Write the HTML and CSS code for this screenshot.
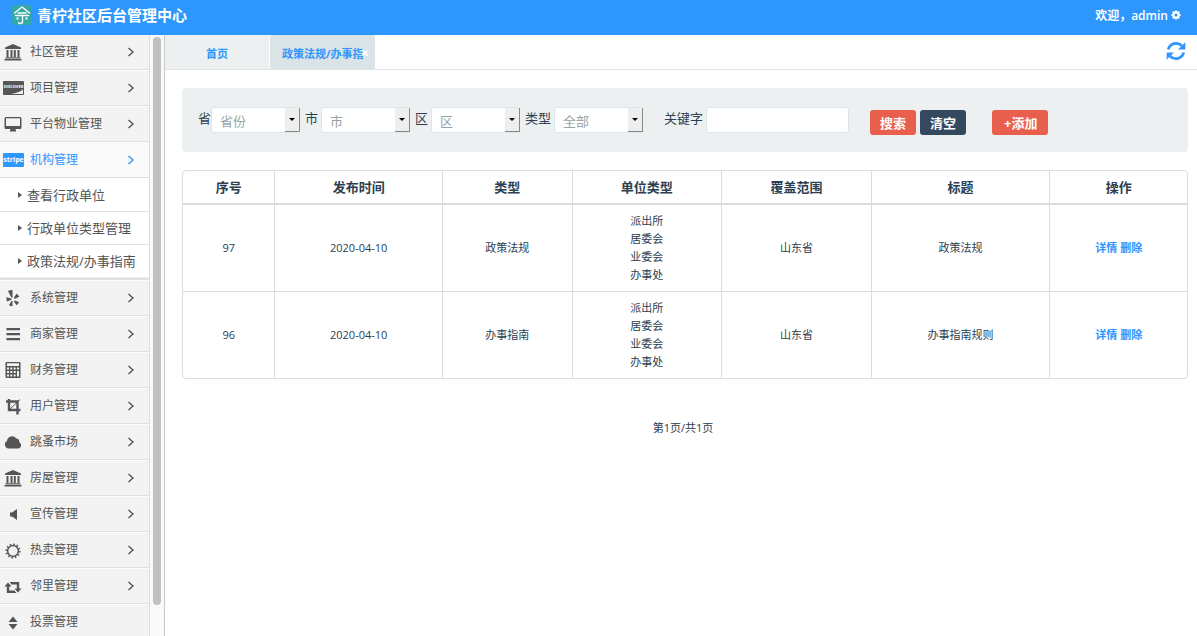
FILE: index.html
```html
<!DOCTYPE html>
<html lang="zh-CN">
<head>
<meta charset="utf-8">
<title>青柠社区后台管理中心</title>
<link rel="stylesheet" href="styles.css">
</head>
<body>
<svg class="defs" aria-hidden="true">
  <symbol id="i-bank" viewBox="0 0 20 18"><path d="M10 1L18 4.5V6H2V4.5zM3.5 7h2v7h-2zM7.5 7h2v7h-2zM10.8 7h2v7h-2zM14.5 7h2v7h-2zM2.500 14.200h15v1.300h-15zM1.500 16h17v1.600h-17z"/></symbol>
  <symbol id="i-chev" viewBox="0 0 8 10"><path d="M1.500 1l4.500 4-4.500 4" fill="none" stroke="currentColor" stroke-width="1.400"/></symbol>
</svg>
<header class="top">
  <svg class="logo" viewBox="0 0 20 20"><rect width="20" height="20" rx="4" fill="#35a9a5"/><g fill="none" stroke="#fff" stroke-width="1.400" stroke-linecap="round" stroke-linejoin="round"><path d="M2.500 8L10 2l7.500 6M6 8h8M3.500 10.500h13M10.500 10.500v6q0 2-2 2t-2-1"/></g><path d="M4.500 12.500h2v2h-2zM13.500 12.500h2v2h-2z" fill="#fff"/></svg>
  <h1 class="brand">青柠社区后台管理中心</h1>
  <a class="user" href="#">欢迎，admin
    <svg class="gear" viewBox="0 0 12 12"><g stroke="#fff" stroke-width="2.600"><path d="M6 .5v11M.5 6h11M2.100 2.100l7.800 7.800M9.900 2.100L2.100 9.900"/></g><circle cx="6" cy="6" r="4.200" fill="#fff"/><circle cx="6" cy="6" r="1.800" fill="#2e97fd"/></svg>
  </a>
</header>
<div class="shell">
  <aside class="side">
    <nav class="menu">
      <a class="item" href="#"><svg class="ico"  viewBox="0 0 20 18"><use href="#i-bank"/></svg><span class="name">社区管理</span><svg class="chev"><use href="#i-chev"/></svg></a>
      <a class="item" href="#"><svg class="ico wide" viewBox="0 0 21 14"><rect width="21" height="14" rx="1"/><path d="M20 8.500v4.500H8q8-1.500 12-4.500z" fill="#f3f3f3"/><text class="card-sm" x="10.500" y="7" text-anchor="middle">DISCOVER</text></svg><span class="name">项目管理</span><svg class="chev"><use href="#i-chev"/></svg></a>
      <a class="item" href="#"><svg class="ico"  viewBox="0 0 20 18"><path fill-rule="evenodd" d="M3 2h14q1.500 0 1.500 1.500v9q0 1.500-1.500 1.500h-4.500l.5 1.500v1H7v-1l.5-1.500H3q-1.500 0-1.500-1.500v-9Q1.500 2 3 2zM3 3.300v7.700h14V3.300z"/></svg><span class="name">平台物业管理</span><svg class="chev"><use href="#i-chev"/></svg></a>
      <a class="item active" href="#"><svg class="ico wide" viewBox="0 0 21 14"><rect width="21" height="14" rx="1"/><text class="card-lg" x="10.500" y="9" text-anchor="middle">stripe</text></svg><span class="name">机构管理</span><svg class="chev"><use href="#i-chev"/></svg></a>
      <div class="sub">
        <a class="leaf" href="#"><span class="tri"></span>查看行政单位</a>
        <a class="leaf" href="#"><span class="tri"></span>行政单位类型管理</a>
        <a class="leaf" href="#"><span class="tri"></span>政策法规/办事指南</a>
      </div>
      <a class="item" href="#"><svg class="ico"  viewBox="0 0 20 18"><path d="M5 2q3-1.500 4.500-1v7.500q-1 .5-1.500-.5zM3.500 8l5 1.800v1L4 12.500q-1-2-.5-4.500zM9.500 12v5q-2 .5-3.500-1l2.500-4zM11.500 11.500l4.500 1.500q-.5 2-2.500 3.200L11 12.500zM11 8.500l2.500-3.700q2 1 2.800 3L12 9.800q-1 .2-1-1.300z"/></svg><span class="name">系统管理</span><svg class="chev"><use href="#i-chev"/></svg></a>
      <a class="item" href="#"><svg class="ico"  viewBox="0 0 20 18"><path d="M3.500 3h13.500v2.200H3.500zM3.500 8h13.500v2.200H3.500zM3.500 13h13.500v2.200H3.500z"/></svg><span class="name">商家管理</span><svg class="chev"><use href="#i-chev"/></svg></a>
      <a class="item" href="#"><svg class="ico"  viewBox="0 0 20 18"><path fill-rule="evenodd" d="M3.500 1h13q1 0 1 1v14q0 1-1 1h-13q-1 0-1-1V2q0-1 1-1zM4 2.300v2.700h12V2.300zM4 6.500v2h2v-2zM7.300 6.500v2h2v-2zM10.700 6.500v2h2v-2zM14 6.500v2h2v-2zM4 10v2h2v-2zM7.300 10v2h2v-2zM10.700 10v2h2v-2zM4 13.500v2h2v-2zM7.300 13.500v2h2v-2zM10.700 13.500v2h2v-2zM14 10v5.500h2V10z"/></svg><span class="name">财务管理</span><svg class="chev"><use href="#i-chev"/></svg></a>
      <a class="item" href="#"><svg class="ico"  viewBox="0 0 20 18"><path d="M3 4.500h11.500V17.500M6 2v11h11.500" fill="none" stroke="currentColor" stroke-width="2.400"/><path d="M6 13L17 2.500" stroke="currentColor"/></svg><span class="name">用户管理</span><svg class="chev"><use href="#i-chev"/></svg></a>
      <a class="item" href="#"><svg class="ico"  viewBox="0 0 20 18"><path d="M5.500 15.500a4 4 0 0 1-1.500-7.500 5 5 0 0 1 9.200-2.500 2.800 2.800 0 0 1 3 3.500 3.500 3.500 0 0 1-.7 6.500z"/></svg><span class="name">跳蚤市场</span><svg class="chev"><use href="#i-chev"/></svg></a>
      <a class="item" href="#"><svg class="ico"  viewBox="0 0 20 18"><use href="#i-bank"/></svg><span class="name">房屋管理</span><svg class="chev"><use href="#i-chev"/></svg></a>
      <a class="item" href="#"><svg class="ico"  viewBox="0 0 20 18"><path d="M7 7.500h2L14 4v11l-5-3.500H7z"/></svg><span class="name">宣传管理</span><svg class="chev"><use href="#i-chev"/></svg></a>
      <a class="item" href="#"><svg class="ico"  viewBox="0 0 20 18"><circle cx="10" cy="10" r="5.400" fill="none" stroke="currentColor" stroke-width="1.500"/><circle cx="10" cy="10" r="6.700" fill="none" stroke="currentColor" stroke-width="1.800" stroke-dasharray="1.500 2.010"/></svg><span class="name">热卖管理</span><svg class="chev"><use href="#i-chev"/></svg></a>
      <a class="item" href="#"><svg class="ico"  viewBox="0 0 20 18"><path d="M1.500 9.500L5 5.500l3.500 4H6.200v4h5.300l1.800 2.500H3.800V9.500zM18.500 11.500L15 15.500l-3.500-4h2.300v-4H8.500L6.700 5h9.500v6.500z"/></svg><span class="name">邻里管理</span><svg class="chev"><use href="#i-chev"/></svg></a>
      <a class="item" href="#"><svg class="ico"  viewBox="0 0 20 18"><path d="M5.500 9L10 3.500 14.500 9zM5.500 11h9L10 16.500z"/></svg><span class="name">投票管理</span></a>
    </nav>
    <div class="track"><div class="thumb"></div></div>
  </aside>
  <main class="main">
    <div class="tabs">
      <a class="tab" href="#">首页</a>
      <a class="tab current" href="#">政策法规/办事指<span class="close">×</span></a>
      <button class="refresh" type="button" aria-label="刷新"><svg viewBox="0 0 20 20"><g fill="none" stroke="currentColor" stroke-width="2.800"><path d="M2.300 8.500A8 8 0 0 1 15.800 4.800M17.700 11.500A8 8 0 0 1 4.200 15.200"/></g><path d="M19.300 1.200V8.500H12zM.7 18.800V11.500H8z" fill="currentColor"/></svg></button>
    </div>
    <div class="page">
      <form class="filter">
        <label for="prov">省</label>
        <span class="pick tight"><select id="prov"><option>省份</option></select><span class="drop"></span></span>
        <label for="city">市</label>
        <span class="pick"><select id="city"><option>市</option></select><span class="drop"></span></span>
        <label for="area">区</label>
        <span class="pick"><select id="area"><option>区</option></select><span class="drop"></span></span>
        <label for="kind">类型</label>
        <span class="pick"><select id="kind"><option>全部</option></select><span class="drop"></span></span>
        <label class="kw" for="word">关键字</label>
        <input class="word" id="word" type="text">
        <button class="btn search" type="button">搜索</button>
        <button class="btn dark" type="button">清空</button>
        <button class="btn add" type="button">+添加</button>
      </form>
      <table class="grid">
        <colgroup><col class="c-no"><col class="c-date"><col class="c-type"><col class="c-unit"><col class="c-unit"><col class="c-title"><col></colgroup>
        <thead><tr><th>序号</th><th>发布时间</th><th>类型</th><th>单位类型</th><th>覆盖范围</th><th>标题</th><th>操作</th></tr></thead>
        <tbody>
          <tr><td>97</td><td>2020-04-10</td><td>政策法规</td><td>派出所<br>居委会<br>业委会<br>办事处</td><td>山东省</td><td>政策法规</td><td><a href="#">详情</a> <a href="#">删除</a></td></tr>
          <tr><td>96</td><td>2020-04-10</td><td>办事指南</td><td>派出所<br>居委会<br>业委会<br>办事处</td><td>山东省</td><td>办事指南规则</td><td><a href="#">详情</a> <a href="#">删除</a></td></tr>
        </tbody>
      </table>
      <p class="pager">第1页/共1页</p>
    </div>
  </main>
</div>
</body>
</html>
```
FILE: styles.css
```css
* { box-sizing: border-box; }
body {
  margin: 0;
  height: 100vh;
  display: flex;
  flex-direction: column;
  overflow: hidden;
  background: #fff;
  color: #2c3e50;
  font-family: "Open Sans", "Noto Sans CJK SC", sans-serif;
  font-size: 11px;
}
a { color: #2e97fd; text-decoration: none; }
.defs { position: absolute; width: 0; height: 0; }

.top {
  flex: none;
  display: flex;
  align-items: center;
  height: 35px;
  padding: 0 16px 5px 12px;
  background: #2e97fd;
  color: #fff;
}
.logo { width: 20px; height: 20px; margin-right: 5px; }
.brand { margin: 0; flex: 1; font-size: 15px; line-height: 20px; font-weight: 700; padding-bottom: 1px; }
.user { display: flex; align-items: center; color: #fff; font-size: 12px; font-weight: 600; }
.gear { width: 10px; height: 10px; margin-left: 3px; }

.shell { flex: 1; display: flex; min-height: 0; }
.side { flex: none; display: flex; width: 165px; overflow: hidden; border-right: 1px solid #c8c8c8; }
.menu { width: 150px; border-right: 1px solid #ddd; }
.item {
  display: flex;
  align-items: center;
  height: 36px;
  padding: 0 14px 0 3px;
  border-top: 1px solid #fcfcfc;
  border-bottom: 1px solid #e0e0e0;
  background: #f3f3f3;
  color: #555;
  font-size: 12px;
}
.item:first-child { height: 35px; border-top: 0; }
.item.active { background: #fafafa; color: #2e97fd; }
.name { flex: 1; margin-left: 7px; line-height: 18px; padding-bottom: 1px; }
.ico { width: 20px; height: 18px; fill: currentColor; }
.ico.wide { width: 21px; height: 14px; margin-right: -1px; }
.card-sm { fill: #fff; font: 700 4px "Open Sans", sans-serif; }
.card-lg { fill: #fff; font: 700 7px "Open Sans", sans-serif; }
.chev { width: 8px; height: 10px; margin-bottom: 1px; }
.sub { border-top: 1px solid #fff; border-bottom: 2px solid #e0e0e0; }
.leaf {
  display: flex;
  align-items: center;
  height: 33px;
  padding: 0 0 2px 18px;
  border-bottom: 1px solid #e0e0e0;
  background: #fff;
  color: #555;
  font-size: 13px;
  white-space: nowrap;
}
.leaf:last-child { border-bottom-color: #eee; }
.tri { margin: 2px 5px 0 0; border: 3px solid transparent; border-left: 4px solid #555; border-right: 0; }
.track { flex: 1; padding: 2px 2px 31px 3px; background: #fafafa; }
.thumb { height: 100%; width: 8px; border-radius: 4px; background: #c1c1c1; }

.main { flex: 1; min-width: 0; }
.tabs { display: flex; height: 35px; border-bottom: 1px solid #e1e3e4; }
.tab {
  position: relative;
  width: 105px;
  padding: 0 0 0 12px;
  background: #ecf0f1;
  font-size: 11px;
  font-weight: 700;
  line-height: 38px;
  white-space: nowrap;
}
.tab:first-child { padding: 0; text-align: center; border-right: 1px solid #fff; }
.tab.current { background: #dae3e6; }
.close { position: absolute; right: 6px; top: 0; color: #fff; font-size: 15px; line-height: 34px; }
.refresh { margin: 5px 11px 0 auto; padding: 0; width: 20px; height: 22px; border: 0; background: none; color: #2e97fd; }
.refresh svg { display: block; width: 20px; height: 20px; }

.page { padding: 18px 9px 0 17px; }
.filter {
  display: flex;
  align-items: flex-start;
  height: 64px;
  padding: 19px 16px 0;
  border-radius: 4px;
  background: #ecf0f1;
  font-size: 13px;
}
.filter label { line-height: 22px; white-space: nowrap; }
.pick { position: relative; width: 89px; margin: 0 5px 0 3px; }
.pick.tight { margin-left: 0; }
.pick select, .word {
  display: block;
  width: 100%;
  height: 26px;
  margin: 0;
  padding: 2px 20px 0 8px;
  border: 1px solid #dce4ec;
  border-radius: 3px;
  background: #fff;
  color: #95a5a6;
  font: inherit;
  appearance: none;
}
.drop {
  position: absolute;
  top: 1px;
  right: 0;
  width: 15px;
  height: 24px;
  display: flex;
  align-items: center;
  justify-content: center;
  border-right: 1px solid #888;
  border-bottom: 1px solid #888;
  background: #eee;
  pointer-events: none;
}
.drop::after { content: ""; border: 3px solid transparent; border-top-color: #000; border-bottom: 0; }
.filter .kw { margin-left: 16px; }
.word { width: 143px; margin-left: 3px; }
.btn {
  height: 25px;
  margin: 3px 0 0 4px;
  padding: 0 10px 1px;
  border: 0;
  border-radius: 3px;
  background: #e95f4e;
  color: #fff;
  font: inherit;
  font-weight: 700;
  white-space: nowrap;
}
.btn.search { margin-left: 21px; }
.btn.dark { background: #34495e; }
.btn.add { margin-left: 26px; padding-left: 12px; }

.grid {
  width: 100%;
  margin-top: 18px;
  table-layout: fixed;
  border: 1px solid #ddd;
  border-radius: 4px;
  border-spacing: 0;
  text-align: center;
}
.c-no { width: 9.1%; }
.c-date { width: 16.7%; }
.c-type { width: 12.9%; }
.c-unit { width: 14.9%; }
.c-title { width: 17.8%; }
.grid th { height: 34px; padding: 0; border-bottom: 2px solid #ddd; font-size: 13px; line-height: 20px; }
.grid td { padding: 7px; border-bottom: 1px solid #ddd; line-height: 18px; }
.grid th + th, .grid td + td { border-left: 1px solid #ddd; }
.grid tr:last-child td { border-bottom: 0; }
.grid a { font-weight: 700; }
.pager { margin: 40px 0 0; padding-right: 4px; text-align: center; line-height: 18px; }
```
